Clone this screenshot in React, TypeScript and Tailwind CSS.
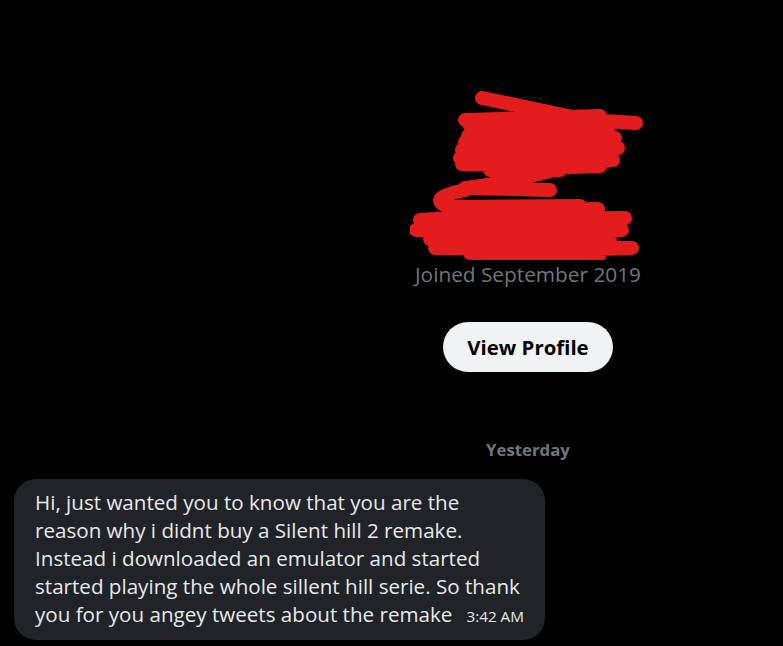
import React from "react";

const font = { fontFamily: '"Open Sans", "Noto Sans", sans-serif' };

// red scribble that hides the avatar and the name
const Scribble: React.FC = () => (
  <svg width="236" height="170" viewBox="0 0 236 170" className="block">
    <circle cx="118" cy="47" r="40" fill="none" stroke="#1c1c1c" strokeWidth="1" />
    <g fill="none" stroke="#e31c1e" strokeWidth="14" strokeLinecap="round" strokeLinejoin="round">
      <path d="M72 8 L177 30 L226 33" />
      <path d="M55 30 L190 26 L60 36 L198 38 L58 46 L200 46" />
      <path d="M55 52 L205 48 L52 60 L208 58 L50 68 L203 70 L52 74 L190 76 L80 80 L150 80" />
      <path d="M157 76 Q100 93 55 98 L140 100" />
      <path d="M55 100 Q16 108 38 117 L170 116" />
      <path d="M40 122 L188 119 L10 130 L215 128 L6 140 L212 140 L20 149 L200 150 L25 158 L222 158 L60 163 L190 164" />
    </g>
  </svg>
);

export default function App() {
  return (
    <div className="w-full h-[646px] overflow-hidden bg-black" style={font}>
      <div className="w-[1056px] flex flex-col items-center pt-[90px]">
        <Scribble />
        <p className="mt-[2px] text-[20.8px] leading-6 text-[#71767b]">Joined September 2019</p>
        <button className="mt-[36px] h-[50px] px-6 rounded-full bg-[#eff3f4] text-black text-[20.4px] font-bold">
          View Profile
        </button>
        <p className="mt-[68px] text-[16.8px] leading-5 font-bold text-[#71767b]">Yesterday</p>
        <div className="self-start ml-[14px] mt-[19px] w-[531px] rounded-[22px] bg-[#202327] pl-[21px] pr-4 pt-[9px] pb-[10px] text-[20.6px] leading-[28px] text-[#e7e9ea]">
          Hi, just wanted you to know that you are the
          <br />
          reason why i didnt buy a Silent hill 2 remake.
          <br />
          Instead i downloaded an emulator and started
          <br />
          started playing the whole sillent hill serie. So thank
          <br />
          you for you angey tweets about the remake
          <span className="ml-[14px] text-[15.3px] text-[#e7e9ea]">3:42 AM</span>
        </div>
      </div>
    </div>
  );
}
